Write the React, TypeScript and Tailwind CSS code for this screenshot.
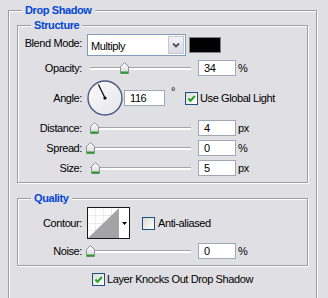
import React from 'react';

const FONT = "font-['Liberation_Sans',Arial,sans-serif] text-[11px] tracking-[-0.4px] text-black";
const BOX = 'border border-[#9d9da1] shadow-[inset_1px_1px_0_#ffffff,1px_1px_0_#ffffff]';
const LEGEND = 'px-[3px] font-bold text-[#0046d5] leading-[13px] bg-[#e0dfe3]';

const Label: React.FC<{ text: string; className?: string }> = ({ text, className = '' }) => (
    <span className={`w-[64px] shrink-0 text-right leading-[13px] ${className}`}>{text}</span>
);

const Thumb: React.FC<{ left: number }> = ({ left }) => (
    <svg width="9" height="12" viewBox="0 0 9 12" className="absolute top-[2px]" style={{ left }}>
        <defs>
            <linearGradient id="thumbFill" x1="0" y1="0" x2="0" y2="1">
                <stop offset="0" stopColor="#ffffff" />
                <stop offset="1" stopColor="#d6d6dc" />
            </linearGradient>
        </defs>
        <path d="M0.5 4.5 L4.5 0.5 L8.5 4.5 L8.5 11.5 L0.5 11.5 Z" fill="url(#thumbFill)" stroke="#8a8f98" />
        <rect x="1" y="9.5" width="7" height="2" fill="#21a121" />
    </svg>
);

const Slider: React.FC<{ value: number }> = ({ value }) => (
    <div className="relative ml-[5px] flex h-4 w-[106px] shrink-0 items-center pl-[3px] pr-[2px]">
        <div className="h-[3px] w-full border-t border-[#a4a4a8] bg-white" />
        <Thumb left={value - 1} />
    </div>
);

const NumBox: React.FC<{ value: string; w?: string }> = ({ value, w = 'w-[38px]' }) => (
    <div className={`${w} flex h-4 shrink-0 items-center border border-[#a0a8b4] bg-white pl-[5px] leading-[13px]`}>
        {value}
    </div>
);

const Check: React.FC<{ checked?: boolean }> = ({ checked }) => (
    <div className="h-[13px] w-[13px] shrink-0 border border-[#1c5180] bg-gradient-to-br from-[#dcdcd7] to-white">
        {checked && (
            <svg width="11" height="11" viewBox="0 0 11 11">
                <path d="M2.5 5.5 L4.5 7.8 L8.8 3" fill="none" stroke="#21a121" strokeWidth="2" />
            </svg>
        )}
    </div>
);

const SliderRow: React.FC<{ label: string; value: number; unit: string }> = ({ label, value, unit }) => (
    <div className="mt-1 flex h-4 items-center">
        <Label text={label} />
        <Slider value={value} />
        <div className="ml-[5px]">
            <NumBox value={String(value)} />
        </div>
        <span className="ml-[2px] leading-[13px]">{unit}</span>
    </div>
);

const Dial: React.FC<{ angle: number }> = ({ angle }) => {
    const r = (angle * Math.PI) / 180;
    const x = 18 + Math.cos(r) * 15;
    const y = 18 - Math.sin(r) * 15;
    return (
        <svg width="36" height="36" viewBox="0 0 36 36" className="ml-[5px] shrink-0">
            <defs>
                <linearGradient id="dialFill" x1="0" y1="0" x2="1" y2="1">
                    <stop offset="0" stopColor="#fafafa" />
                    <stop offset="1" stopColor="#e6e6ea" />
                </linearGradient>
            </defs>
            <circle cx="18" cy="18" r="17" fill="url(#dialFill)" stroke="#4b5a84" strokeWidth="1.4" />
            <line x1="18" y1="18" x2={x} y2={y} stroke="#000" strokeWidth="1.2" />
            <circle cx="18" cy="18" r="1.6" fill="#000" />
        </svg>
    );
};

export default function App() {
    return (
        <div className={`h-[298px] w-[328px] overflow-hidden bg-[#e0dfe3] pl-[8px] pr-[11px] pt-[4px] ${FONT}`}>
            <fieldset className={`${BOX} h-[330px] px-2`}>
                <legend className={`ml-[5px] ${LEGEND}`}>Drop Shadow</legend>

                <fieldset className={`${BOX} mt-[2px] pb-[6px]`}>
                    <legend className={`ml-[13px] ${LEGEND}`}>Structure</legend>

                    <div className="mt-[2px] flex h-[22px] items-center">
                        <Label text="Blend Mode:" className="mb-[4px]" />
                        <div className="ml-[5px] flex h-[22px] w-[99px] shrink-0 border border-[#7f9db9] bg-white">
                            <span className="flex-1 pl-[3px] pt-[5px] leading-[13px]">Multiply</span>
                            <div className="my-[1px] mr-[1px] flex w-[16px] items-center justify-center border border-[#c3cad6] bg-gradient-to-b from-[#f4f4f6] to-[#d9d9e0]">
                                <svg width="8" height="5" viewBox="0 0 8 5">
                                    <path d="M1 0.5 L4 3.5 L7 0.5" fill="none" stroke="#4d4d55" strokeWidth="1.8" />
                                </svg>
                            </div>
                        </div>
                        <div className="ml-[3px] h-4 w-[32px] border border-[#808080] bg-black" />
                    </div>

                    <SliderRow label="Opacity:" value={34} unit="%" />

                    <div className="mt-1 flex h-[36px] items-center">
                        <Label text="Angle:" />
                        <Dial angle={116} />
                        <div className="ml-[1px]">
                            <NumBox value="116" w="w-[41px]" />
                        </div>
                        <span className="mb-[14px] w-[20px] shrink-0 pl-[6px] leading-[13px]">°</span>
                        <Check checked />
                        <span className="ml-[2px] leading-[13px]">Use Global Light</span>
                    </div>

                    <SliderRow label="Distance:" value={4} unit="px" />
                    <SliderRow label="Spread:" value={0} unit="%" />
                    <SliderRow label="Size:" value={5} unit="px" />
                </fieldset>

                <fieldset className={`${BOX} mt-[9px] pb-[6px]`}>
                    <legend className={`ml-[13px] ${LEGEND}`}>Quality</legend>

                    <div className="mt-[2px] flex h-[32px] items-center">
                        <Label text="Contour:" />
                        <div className="ml-[5px] flex h-[32px] w-[43px] shrink-0 border border-[#1a1a1a] bg-white">
                            <svg width="31" height="30" viewBox="0 0 31 30">
                                <path d="M7.5 0 V30 M15.5 0 V30 M23.5 0 V30 M0 7.5 H31 M0 15.5 H31 M0 22.5 H31" stroke="#ececec" />
                                <polygon points="0,30 31,0 31,30" fill="#a4a4a8" />
                            </svg>
                            <div className="flex flex-1 items-center justify-center">
                                <svg width="5" height="3" viewBox="0 0 5 3">
                                    <polygon points="0,0 5,0 2.5,3" fill="#000" />
                                </svg>
                            </div>
                        </div>
                        <div className="ml-[12px]">
                            <Check />
                        </div>
                        <span className="ml-[3px] leading-[13px]">Anti-aliased</span>
                    </div>

                    <SliderRow label="Noise:" value={0} unit="%" />
                </fieldset>

                <div className="ml-[75px] mt-[7px] flex items-center">
                    <Check checked />
                    <span className="ml-[2px] leading-[13px]">Layer Knocks Out Drop Shadow</span>
                </div>
            </fieldset>
        </div>
    );
}
